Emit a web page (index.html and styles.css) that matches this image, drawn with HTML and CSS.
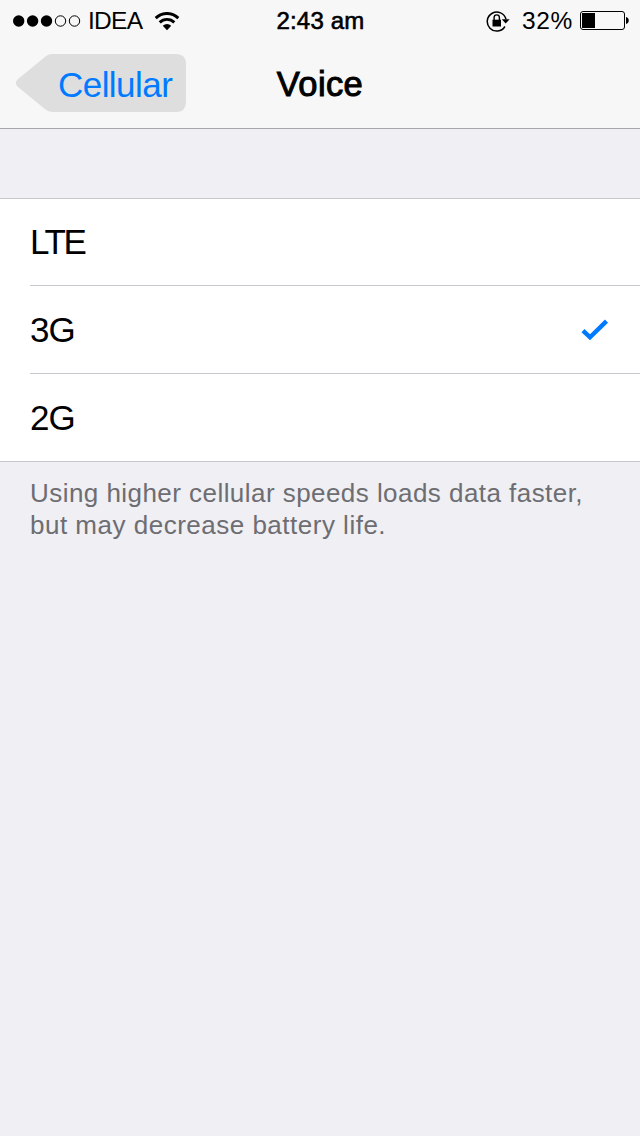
FILE: index.html
```html
<!DOCTYPE html>
<html lang="en">
<head>
<meta charset="utf-8">
<title>Voice</title>
<link rel="stylesheet" href="styles.css">
</head>
<body>
<header class="header">
  <div class="status">
    <div class="status-left">
      <svg class="signal" width="68" height="12" viewBox="0 0 68 12">
        <circle cx="5.7" cy="6" r="5.7"/><circle cx="19.6" cy="6" r="5.7"/><circle cx="33.5" cy="6" r="5.7"/>
        <g fill="none" stroke="#000" stroke-width="1"><circle cx="47.5" cy="6" r="5.2"/><circle cx="61.5" cy="6" r="5.2"/></g>
      </svg>
      <span class="carrier">IDEA</span>
      <svg class="wifi" width="26" height="19" viewBox="0 0 26 19">
        <g fill="none" stroke="#000" stroke-width="2.9">
          <path d="M1.7 6.1a16 16 0 0 1 22.6 0"/>
          <path d="M5.7 10.4a10.4 10.4 0 0 1 14.6 0"/>
        </g>
        <path d="M8.8 13.800a6 6 0 0 1 8.400 0L13 18.200z"/>
      </svg>
    </div>
    <span class="time">2:43 am</span>
    <div class="status-right">
      <svg class="lock" width="25" height="23" viewBox="0 0 25 23">
        <path d="M20 9.300A9.500 9.500 0 1 0 18.900 16.500" fill="none" stroke="#000" stroke-width="1.5"/>
        <path d="M15.800 9.200h7.800L19.700 13.400z"/>
        <path d="M6.500 9.700h8.500v6.800H6.500z"/>
        <path d="M8.100 10V7.500a2.650 2.650 0 0 1 5.300 0V10" fill="none" stroke="#000" stroke-width="1.4"/>
      </svg>
      <span class="percent">32%</span>
      <svg class="battery" width="50" height="20" viewBox="0 0 50 20">
        <rect x=".5" y=".5" width="44" height="18" rx="2.5" fill="none" stroke="#000"/>
        <path d="M2 2h13v15H2zM46 6a3.6 3.6 0 0 1 0 7z"/>
      </svg>
    </div>
  </div>
  <nav class="nav">
    <a class="back">
      <svg class="back-shape" width="171" height="58" viewBox="0 0 171 58"><path d="M37 0H161Q171 0 171 10V48Q171 58 161 58H37Q33.500 58 30.500 55.600L3 33Q-1.500 29 3 25L30.500 2.400Q33.500 0 37 0Z" fill="#dedede"/></svg>
      <span class="back-label">Cellular</span>
    </a>
    <h1 class="title">Voice</h1>
  </nav>
</header>
<main>
  <ul class="group">
    <li class="row"><span class="lte">LTE</span></li>
    <li class="row"><span class="gen">3G</span>
      <svg width="28" height="22" viewBox="0 0 28 22"><path d="M2 11.600L9 18.300L25.500 2.100" fill="none" stroke="#007aff" stroke-width="4.400"/></svg>
    </li>
    <li class="row"><span class="gen">2G</span></li>
  </ul>
  <p class="note"><span class="line-one">Using higher cellular speeds loads data faster,</span><br><span class="line-two">but may decrease battery life.</span></p>
</main>
</body>
</html>
```
FILE: styles.css
```css
* { box-sizing: border-box; }
body {
  margin: 0;
  min-height: 1136px;
  background: #efeff4;
  color: #000;
  font-family: "Liberation Sans", Arial, sans-serif;
}
.header { height: 129px; background: #f7f7f7; border-bottom: 1px solid #a7a7ab; }
.status {
  display: grid;
  grid-template-columns: 1fr auto 1fr;
  align-items: center;
  height: 40px;
  padding: 1px 10px 0 13px;
  font-size: 24.500px;
  line-height: 40px;
}
.status-left, .status-right { display: flex; align-items: center; }
.status-right { justify-content: flex-end; }
.carrier { width: 54px; margin-left: 7px; letter-spacing: -.7px; }
.wifi { margin-left: 11.500px; }
.time { margin-left: -2px; font-size: 24px; letter-spacing: .2px; -webkit-text-stroke: .6px #000; }
.percent { width: 51px; margin-left: 11px; letter-spacing: .6px; }
.battery { margin-left: 7px; }
.nav {
  display: grid;
  grid-template-columns: 1fr auto 1fr;
  height: 88px;
  padding: 14px 15px 0;
}
.back { display: grid; width: 171px; height: 58px; }
.back-shape, .back-label { grid-area: 1 / 1; }
.back-label { padding-left: 43px; color: #007aff; font-size: 35px; line-height: 61px; letter-spacing: -.55px; white-space: nowrap; }
.title { margin: 0; font-size: 34.500px; font-weight: 400; line-height: 61px; letter-spacing: .4px; -webkit-text-stroke: 1px #000; }
.group { margin: 69px 0 0; padding: 0 0 0 30px; list-style: none; background: #fff; border: solid #c8c7cc; border-width: 1px 0; }
.row {
  display: flex;
  align-items: center;
  justify-content: space-between;
  height: 88px;
  padding-right: 31px;
  border-bottom: 1px solid #c8c7cc;
  font-size: 35px;
}
.row:first-child { height: 87px; }
.row:last-child { height: 87px; border-bottom: 0; }
.lte { letter-spacing: -2.400px; }
.gen { letter-spacing: -1px; }
.note { margin: 0; padding: 15px 30px; color: #6d6d72; font-size: 26px; line-height: 32px; white-space: nowrap; }
.line-one { letter-spacing: .45px; }
.line-two { letter-spacing: .5px; }
```
